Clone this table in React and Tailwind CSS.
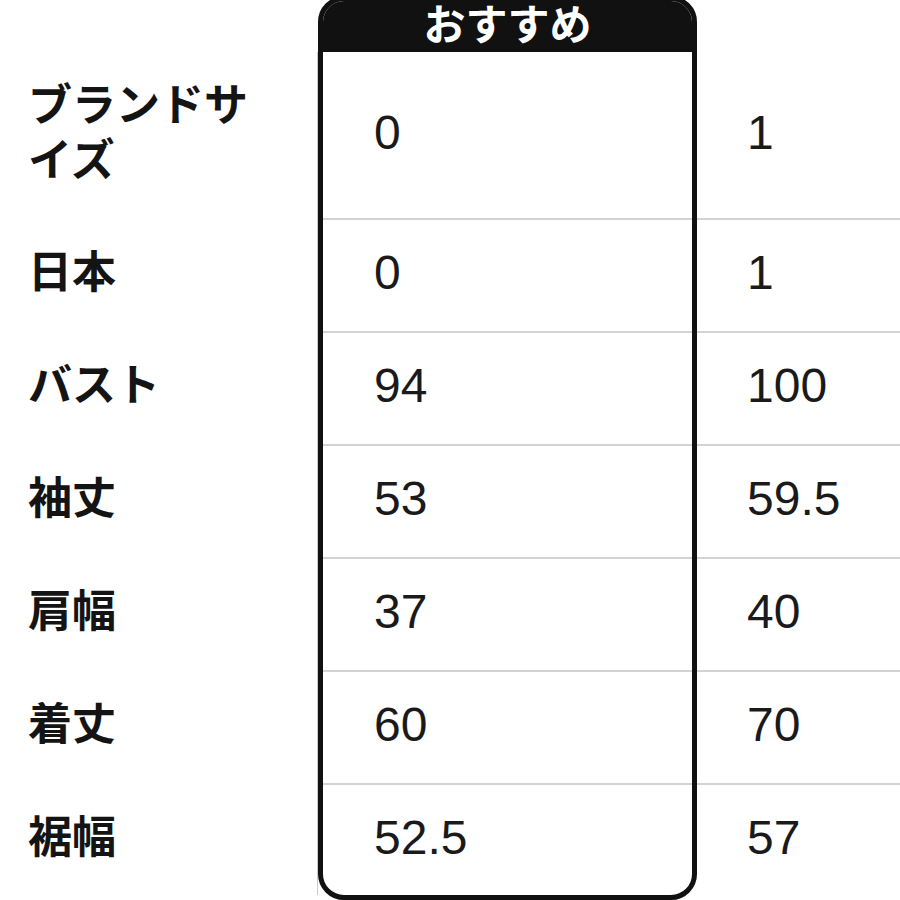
import React from "react";

const labels = ["ブランドサイズ", "日本", "バスト", "袖丈", "肩幅", "着丈", "裾幅"];
const col2 = ["0", "0", "94", "53", "37", "60", "52.5"];
const col3 = ["1", "1", "100", "59.5", "40", "70", "57"];
const heights = ["h-[166px]", "h-[113px]", "h-[113px]", "h-[113px]", "h-[113px]", "h-[113px]", "h-[112px]"];

const jp = { fontFamily: '"Noto Sans CJK JP", "Noto Sans", sans-serif' };
const num = { fontFamily: '"Liberation Sans", Arial, sans-serif' };

export default function App() {
  return (
    <div className="w-[900px] h-[900px] overflow-hidden bg-white flex items-start">
      {/* Label column */}
      <div className="w-[318px] shrink-0 flex flex-col">
        <div className="h-[52px]" />
        <div className="flex flex-col border-r-[1.5px] border-[#c9c9c9]">
          {labels.map((l, i) => (
            <div key={l} className={`${heights[i]} flex items-center pl-[28px] pb-[10px]`}>
              <div
                className={`font-bold text-[44px] leading-[55px] text-[#141414] ${i === 0 ? "w-[232px]" : ""}`}
                style={jp}
              >
                {l}
              </div>
            </div>
          ))}
        </div>
      </div>

      {/* Recommended column */}
      <div className="w-[379px] shrink-0 -mt-[4px] h-[904px] border-[5px] border-[#111111] rounded-[26px] overflow-hidden flex flex-col bg-white">
        <div className="h-[51px] shrink-0 bg-[#111111] flex justify-center items-start">
          <span className="text-white font-bold text-[42px] leading-[42px]" style={jp}>
            おすすめ
          </span>
        </div>
        {col2.map((v, i) => (
          <div
            key={i}
            className={`${heights[i]} shrink-0 flex items-center pl-[51px] pb-[5px] ${i > 0 ? "border-t-2 border-[#d3d3d3]" : ""}`}
          >
            <span className="text-[48px] leading-none text-[#1a1a1a]" style={num}>
              {v}
            </span>
          </div>
        ))}
      </div>

      {/* Third column */}
      <div className="flex-1 flex flex-col">
        <div className="h-[52px]" />
        {col3.map((v, i) => (
          <div
            key={i}
            className={`${heights[i]} flex items-center pl-[50px] pb-[5px] ${i > 0 ? "border-t-2 border-[#d3d3d3]" : ""}`}
          >
            <span className="text-[48px] leading-none text-[#1a1a1a]" style={num}>
              {v}
            </span>
          </div>
        ))}
      </div>
    </div>
  );
}
